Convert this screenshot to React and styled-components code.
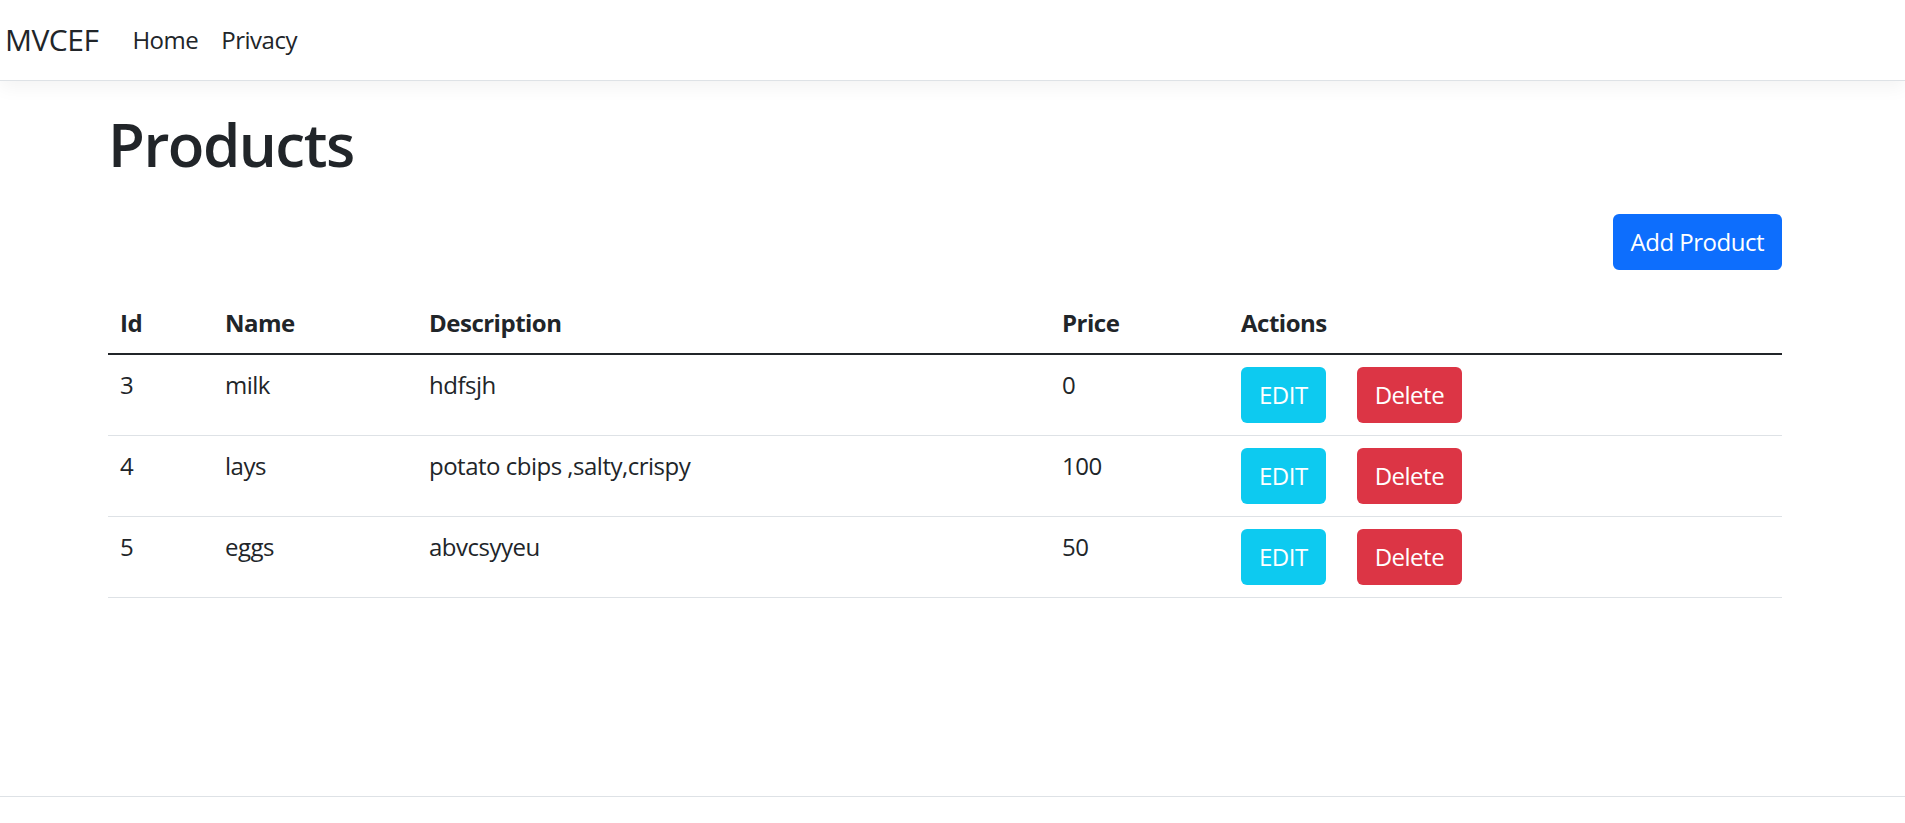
import React from "react";
import styled, { createGlobalStyle } from "styled-components";

const Global = createGlobalStyle`
  html, body { margin: 0; padding: 0; }
  body {
    font-family: "Open Sans", "Noto Sans", sans-serif;
    font-size: 24px;
    line-height: 1.5;
    letter-spacing: -0.5px;
    color: #212529;
    background: #fff;
  }
  * { box-sizing: border-box; }
`;

const Page = styled.div`
  height: 100vh;
  overflow: hidden;
  display: flex;
  flex-direction: column;
`;

const Nav = styled.nav`
  height: 81px;
  flex: 0 0 auto;
  display: flex;
  align-items: center;
  padding: 0 5px;
  background: #fff;
  border-bottom: 1px solid #dee2e6;
  box-shadow: 0 6px 18px rgba(0, 0, 0, 0.05);
  position: relative;
  z-index: 1;
`;

const Brand = styled.a`
  font-size: 30px;
  color: #212529;
  text-decoration: none;
  margin-right: 34px;
  line-height: 1;
`;

const NavLinks = styled.div`
  display: flex;
  gap: 23px;
`;

const NavLink = styled.a`
  font-size: 24px;
  color: #212529;
  text-decoration: none;
`;

const Main = styled.main`
  flex: 0 0 auto;
  min-height: 715px;
  padding: 27px 123px 0 108px;
`;

const Title = styled.h1`
  margin: 0;
  font-size: 60px;
  font-weight: 600;
  line-height: 72px;
  letter-spacing: -1.5px;
`;

const Toolbar = styled.div`
  display: flex;
  justify-content: flex-end;
  margin-top: 34px;
  margin-bottom: 23px;
`;

const Button = styled.button`
  font-family: inherit;
  font-size: 24px;
  letter-spacing: -0.5px;
  line-height: 36px;
  height: 56px;
  padding: 0 18px;
  border: none;
  border-radius: 6px;
  color: #fff;
  background: ${(p) => p.$bg};
  cursor: pointer;
`;

const Table = styled.table`
  width: 100%;
  border-collapse: collapse;
  table-layout: fixed;
  vertical-align: top;
`;

const Th = styled.th`
  text-align: left;
  font-weight: 700;
  padding: 12px;
  line-height: 36px;
  width: ${(p) => p.$w}px;
  border-bottom: 2px solid #212529;
`;

const Td = styled.td`
  padding: 12px;
  line-height: 36px;
  border-bottom: 1px solid #dee2e6;
  vertical-align: top;
`;

const Actions = styled.div`
  display: flex;
  gap: 31px;
`;

const Footer = styled.footer`
  flex: 0 0 auto;
  height: 90px;
  border-top: 1px solid #dee2e6;
`;

const products = [
  { id: 3, name: "milk", description: "hdfsjh", price: 0 },
  { id: 4, name: "lays", description: "potato cbips ,salty,crispy", price: 100 },
  { id: 5, name: "eggs", description: "abvcsyyeu", price: 50 },
];

export default function App() {
  return (
    <Page>
      <Global />
      <Nav>
        <Brand href="#">MVCEF</Brand>
        <NavLinks>
          <NavLink href="#">Home</NavLink>
          <NavLink href="#">Privacy</NavLink>
        </NavLinks>
      </Nav>
      <Main>
        <Title>Products</Title>
        <Toolbar>
          <Button $bg="#0d6efd">Add Product</Button>
        </Toolbar>
        <Table>
          <thead>
            <tr>
              <Th $w={105}>Id</Th>
              <Th $w={204}>Name</Th>
              <Th $w={633}>Description</Th>
              <Th $w={179}>Price</Th>
              <Th $w={553}>Actions</Th>
            </tr>
          </thead>
          <tbody>
            {products.map((p) => (
              <tr key={p.id}>
                <Td>{p.id}</Td>
                <Td>{p.name}</Td>
                <Td>{p.description}</Td>
                <Td>{p.price}</Td>
                <Td>
                  <Actions>
                    <Button $bg="#0dcaf0">EDIT</Button>
                    <Button $bg="#dc3545">Delete</Button>
                  </Actions>
                </Td>
              </tr>
            ))}
          </tbody>
        </Table>
      </Main>
      <Footer />
    </Page>
  );
}
